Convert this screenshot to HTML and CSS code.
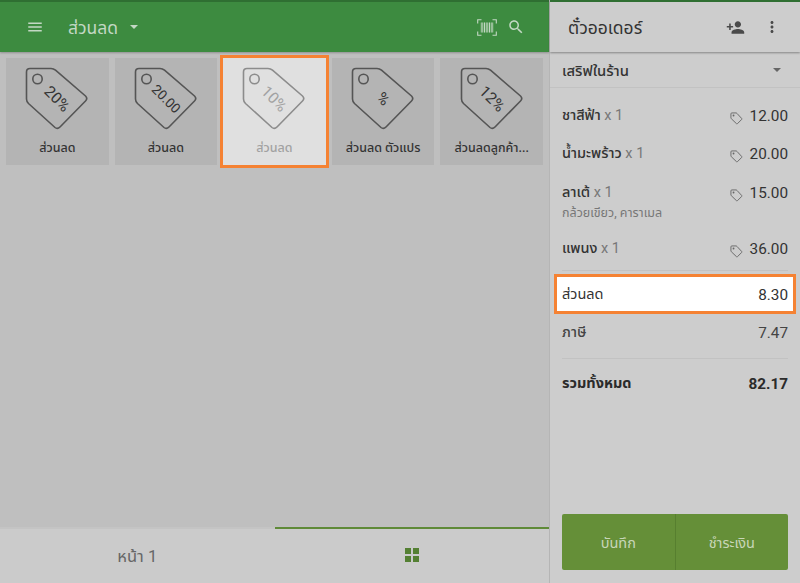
FILE: index.html

```html
<!DOCTYPE html>
<html lang="th">
<head>
<meta charset="UTF-8">
<title>ตั๋วออเดอร์</title>
<link rel="stylesheet" href="styles.css">
</head>
<body>
<svg class="defs" width="0" height="0">
    <symbol id="tag" viewBox="0 0 64 64">
        <path d="M5 1.500H26q2.500 0 4.500 1.700L60.500 29q2.500 2.500 0 5L35 60q-2.500 2.500-5 .5L3.500 36.500Q1.500 34.500 1.500 32V5Q1.500 1.500 5 1.500Z" fill="none" stroke="currentColor" stroke-width="1.600"/>
        <circle cx="12.500" cy="12" r="4.700" fill="none" stroke="currentColor" stroke-width="1.600"/>
    </symbol>
    <symbol id="tag-small" viewBox="0 0 14 14">
        <path d="M2 1H6.500Q7 1 7.500 1.500L12.600 7Q13 7.500 12.600 8L8 12.600Q7.500 13 7 12.600L1.400 7.200Q1 6.800 1 6.300V2Q1 1 2 1Z" fill="none" stroke="currentColor" stroke-width="1"/>
        <circle cx="3.800" cy="3.800" r="1" fill="currentColor"/>
    </symbol>
</svg>

<div class="app">
    <div class="main">
        <div class="topbar">
            <svg class="icon menu-icon" viewBox="0 0 24 24"><path d="M3 18h18v-2H3v2zm0-5h18v-2H3v2zm0-7v2h18V6H3z"/></svg>
            <span class="topbar-title">ส่วนลด</span>
            <span class="caret"></span>
            <span class="spacer"></span>
            <svg class="barcode" viewBox="0 0 20 17">
                <path d="M4.500 .7H.7V4.500M15.500 .7H19.300V4.500M4.500 16.300H.7V12.500M15.500 16.300H19.300V12.500" fill="none" stroke="currentColor" stroke-width="1.100"/>
                <path d="M3 3.500H17V13.500H3Z" fill="currentColor" opacity=".18"/>
                <path d="M5 3.500V13.500M7.500 3.500V13.500M10 3.500V13.500M12.500 3.500V13.500M15 3.500V13.500" stroke="currentColor" stroke-width="1.200"/>
            </svg>
            <svg class="icon search-icon" viewBox="0 0 24 24"><path d="M15.500 14h-.79l-.28-.27C15.410 12.590 16 11.110 16 9.500 16 5.910 13.090 3 9.500 3S3 5.910 3 9.500 5.910 16 9.500 16c1.610 0 3.090-.59 4.230-1.570l.27.28v.79l5 4.990L20.490 19l-4.990-5zm-6 0C7.010 14 5 11.990 5 9.500S7.010 5 9.500 5 14 7.010 14 9.500 11.990 14 9.500 14z"/></svg>
        </div>

        <div class="grid">
            <div class="card">
                <div class="tag">
                    <svg viewBox="0 0 64 64"><use href="#tag"/><text x="32" y="37" transform="rotate(45 32 32)">20%</text></svg>
                </div>
                <div class="card-label">ส่วนลด</div>
            </div>
            <div class="card">
                <div class="tag">
                    <svg viewBox="0 0 64 64"><use href="#tag"/><text x="32" y="36.500" class="small" transform="rotate(45 32 32)">20.00</text></svg>
                </div>
                <div class="card-label">ส่วนลด</div>
            </div>
            <div class="card selected">
                <div class="tag">
                    <svg viewBox="0 0 64 64"><use href="#tag"/><text x="32" y="37" transform="rotate(45 32 32)">10%</text></svg>
                </div>
                <div class="card-label">ส่วนลด</div>
            </div>
            <div class="card">
                <div class="tag">
                    <svg viewBox="0 0 64 64"><use href="#tag"/><text x="32" y="37" transform="rotate(45 32 32)">%</text></svg>
                </div>
                <div class="card-label">ส่วนลด ตัวแปร</div>
            </div>
            <div class="card">
                <div class="tag">
                    <svg viewBox="0 0 64 64"><use href="#tag"/><text x="32" y="37" transform="rotate(45 32 32)">12%</text></svg>
                </div>
                <div class="card-label">ส่วนลดลูกค้า...</div>
            </div>
        </div>

        <div class="tabs">
            <div class="tab">หน้า 1</div>
            <div class="tab active">
                <span class="squares"><i></i><i></i><i></i><i></i></span>
            </div>
        </div>
    </div>

    <div class="order">
        <div class="order-head">
            <span class="order-title">ตั๋วออเดอร์</span>
            <svg class="icon person-icon" viewBox="0 0 24 24"><path d="M15 12c2.210 0 4-1.790 4-4s-1.790-4-4-4-4 1.790-4 4 1.790 4 4 4zm-9-2V7H4v3H1v2h3v3h2v-3h3v-2H6zm9 4c-2.670 0-8 1.340-8 4v2h16v-2c0-2.660-5.330-4-8-4z"/></svg>
            <svg class="icon more-icon" viewBox="0 0 24 24"><path d="M12 8c1.100 0 2-.9 2-2s-.9-2-2-2-2 .9-2 2 .9 2 2 2zm0 2c-1.100 0-2 .9-2 2s.9 2 2 2 2-.9 2-2-.9-2-2-2zm0 6c-1.100 0-2 .9-2 2s.9 2 2 2 2-.9 2-2-.9-2-2-2z"/></svg>
        </div>
        <div class="dining">
            <span class="dining-name">เสริฟในร้าน</span>
            <span class="caret dark"></span>
        </div>

        <div class="items">
            <div class="item">
                <span class="item-name">ชาสีฟ้า <em>x 1</em></span>
                <svg class="tag-small"><use href="#tag-small"/></svg>
                <span class="price">12.00</span>
            </div>
            <div class="item">
                <span class="item-name">น้ำมะพร้าว <em>x 1</em></span>
                <svg class="tag-small"><use href="#tag-small"/></svg>
                <span class="price">20.00</span>
            </div>
            <div class="item with-note">
                <span class="item-name">ลาเต้ <em>x 1</em></span>
                <svg class="tag-small"><use href="#tag-small"/></svg>
                <span class="price">15.00</span>
                <div class="item-note">กล้วยเขียว, คาราเมล</div>
            </div>
            <div class="item">
                <span class="item-name">แพนง <em>x 1</em></span>
                <svg class="tag-small"><use href="#tag-small"/></svg>
                <span class="price">36.00</span>
            </div>
        </div>

        <div class="summary">
            <div class="sum-row highlight"><span>ส่วนลด</span><span class="num">8.30</span></div>
            <div class="sum-row tax"><span>ภาษี</span><span class="num">7.47</span></div>
            <div class="sum-row total"><span>รวมทั้งหมด</span><span class="num">82.17</span></div>
        </div>

        <div class="actions">
            <div class="action">บันทึก</div>
            <div class="action">ชำระเงิน</div>
        </div>
    </div>
</div>
</body>
</html>
```

FILE: styles.css

```css
* {
    box-sizing: border-box;
}

html, body {
    margin: 0;
    padding: 0;
    height: 100%;
    overflow: hidden;
}

body {
    font-family: Roboto, "Noto Sans", "Noto Sans Thai", sans-serif;
    color: #333;
    background-color: #cdcdcd;
}

.defs {
    position: absolute;
}

.app {
    display: flex;
    height: 583px;
}

.icon {
    fill: currentColor;
}

.caret {
    width: 0;
    height: 0;
    border-left: 4px solid transparent;
    border-right: 4px solid transparent;
    border-top: 4px solid #c3d8c4;
}

.caret.dark {
    border-top-color: #666;
}

.spacer {
    flex: 1;
}

/* left side */
.main {
    width: 549px;
    display: flex;
    flex-direction: column;
    background-color: #bfbfbf;
}

.topbar {
    height: 52px;
    display: flex;
    align-items: center;
    padding-left: 26px;
    background-color: #3d8b40;
    border-top: 2px solid #2f6f32;
    box-shadow: 0 1px 2px rgba(0, 0, 0, 0.25);
    color: #c3d8c4;
}

.menu-icon {
    width: 18px;
    height: 18px;
}

.topbar-title {
    font-size: 17.500px;
    margin-left: 24px;
    margin-right: 12px;
    padding-top: 2px;
}

.barcode {
    width: 20px;
    height: 17px;
    margin-left: 1px;
}

.search-icon {
    width: 18px;
    height: 18px;
    margin-left: 10px;
    margin-right: 24px;
}

.grid {
    flex: 1;
    display: grid;
    grid-template-columns: repeat(5, 1fr);
    grid-auto-rows: 107px;
    gap: 6px;
    padding: 6px;
}

.card {
    display: flex;
    flex-direction: column;
    align-items: center;
    background-color: #b4b4b4;
    color: #555;
}

.card.selected {
    background-color: #e0e0e0;
    color: #8c8c8c;
    outline: 3px solid #f58233;
}

.tag {
    width: 64px;
    height: 64px;
    margin-top: 9px;
}

.tag svg {
    display: block;
    width: 64px;
    height: 64px;
    color: inherit;
}

.tag text {
    font-size: 15.500px;
    text-anchor: middle;
    fill: #333;
}

.tag text.small {
    font-size: 13.500px;
}

.selected .tag text {
    fill: #a2a2a2;
}

.card-label {
    margin-top: 8px;
    font-size: 12.500px;
    font-weight: 500;
    color: #333;
    white-space: nowrap;
}

.selected .card-label {
    color: #a2a2a2;
}

.tabs {
    display: flex;
    height: 56px;
    background-color: #cbcbcb;
}

.tab {
    flex: 1;
    display: flex;
    align-items: center;
    justify-content: center;
    font-size: 16.500px;
    color: #666;
    border-top: 2px solid #c4c4c4;
}

.tab.active {
    border-top-color: #5f8a38;
    padding-bottom: 2px;
}

.squares {
    display: grid;
    grid-template-columns: 6px 6px;
    gap: 2px;
}

.squares i {
    height: 6px;
    background-color: #548033;
}

/* order side */
.order {
    width: 251px;
    display: flex;
    flex-direction: column;
    background-color: #cdcdcd;
    border-left: 1px solid #b5b5b5;
    position: relative;
}

.order-head {
    height: 52px;
    display: flex;
    align-items: center;
    padding-left: 18px;
    border-top: 2px solid #2f6f32;
    box-shadow: 0 1px 2px rgba(0, 0, 0, 0.35);
    color: #4a4a4a;
}

.order-title {
    flex: 1;
    font-size: 17.500px;
    color: #333;
    padding-top: 3px;
}

.person-icon {
    width: 19px;
    height: 19px;
    margin-right: 18px;
}

.more-icon {
    width: 18px;
    height: 18px;
    margin-right: 19px;
}

.dining {
    height: 36px;
    display: flex;
    align-items: center;
    justify-content: space-between;
    padding: 0 19px 0 12px;
    border-bottom: 1px solid #c2c2c2;
}

.dining-name {
    font-size: 14.800px;
    font-weight: 500;
    padding-top: 3px;
}

.items {
    margin: 0 12px;
    padding: 8px 0 3px;
    border-bottom: 1px solid #c2c2c2;
}

.item {
    display: flex;
    flex-wrap: wrap;
    align-items: center;
    height: 38px;
    padding-top: 2px;
    font-size: 14.500px;
}

.item.with-note {
    height: 57px;
    align-content: flex-start;
}

.item.with-note .item-name,
.item.with-note .price {
    margin-top: 8px;
}

.item-name {
    flex: 1;
    font-weight: 500;
}

.item-name em {
    font-style: normal;
    font-weight: 400;
    color: #777;
}

.tag-small {
    width: 13px;
    height: 13px;
    margin-top: 4px;
    margin-right: 7px;
    color: #666;
}

.item.with-note .tag-small {
    margin-top: 12px;
}

.price {
    font-size: 15.300px;
}

.item-note {
    width: 100%;
    margin-top: 0;
    font-size: 12.500px;
    color: #777;
}

.summary {
    margin-top: 3px;
}

.sum-row {
    display: flex;
    justify-content: space-between;
    align-items: center;
    margin: 0 12px;
    font-size: 14.500px;
    font-weight: 500;
}

.sum-row .num {
    font-size: 15.300px;
}

.sum-row.highlight {
    height: 40px;
    margin: 0 4px;
    padding: 2px 5px 0;
    background-color: #fff;
    border: 3px solid #f58233;
    font-weight: 400;
    color: #333;
}

.sum-row.tax {
    height: 45px;
    padding-bottom: 6px;
    color: #444;
    border-bottom: 1px solid #c2c2c2;
    font-weight: 400;
}

.sum-row.tax span:first-child {
    font-weight: 500;
}

.sum-row.total {
    height: 49px;
    font-weight: 700;
    color: #2b2b2b;
}

.actions {
    position: absolute;
    left: 12px;
    right: 12px;
    bottom: 13px;
    height: 56px;
    display: flex;
    background-color: #658f38;
    border-radius: 2px;
}

.action {
    flex: 1;
    display: flex;
    align-items: center;
    justify-content: center;
    padding-top: 3px;
    font-size: 14.500px;
    color: #c8d6b8;
}

.action + .action {
    border-left: 1px solid #577f2f;
}
```
